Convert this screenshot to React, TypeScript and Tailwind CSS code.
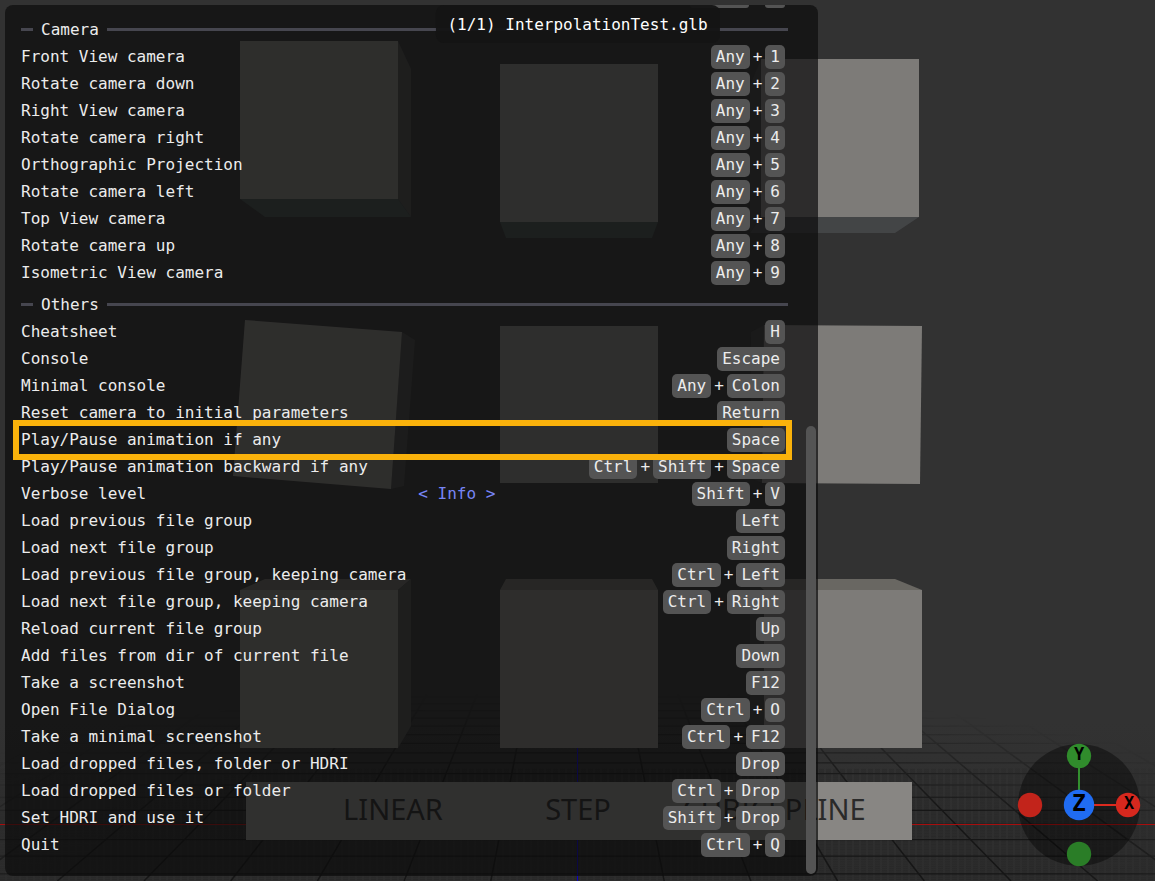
import { Fragment } from "react";
import clsx from "clsx";

type Binding = {
  label: string;
  keys: string[];
  value?: string;
  highlighted?: boolean;
};

const cameraBindings: Binding[] = [
  { label: "Front View camera", keys: ["Any", "1"] },
  { label: "Rotate camera down", keys: ["Any", "2"] },
  { label: "Right View camera", keys: ["Any", "3"] },
  { label: "Rotate camera right", keys: ["Any", "4"] },
  { label: "Orthographic Projection", keys: ["Any", "5"] },
  { label: "Rotate camera left", keys: ["Any", "6"] },
  { label: "Top View camera", keys: ["Any", "7"] },
  { label: "Rotate camera up", keys: ["Any", "8"] },
  { label: "Isometric View camera", keys: ["Any", "9"] },
];

const otherBindings: Binding[] = [
  { label: "Cheatsheet", keys: ["H"] },
  { label: "Console", keys: ["Escape"] },
  { label: "Minimal console", keys: ["Any", "Colon"] },
  { label: "Reset camera to initial parameters", keys: ["Return"] },
  { label: "Play/Pause animation if any", keys: ["Space"], highlighted: true },
  { label: "Play/Pause animation backward if any", keys: ["Ctrl", "Shift", "Space"] },
  { label: "Verbose level", keys: ["Shift", "V"], value: "Info" },
  { label: "Load previous file group", keys: ["Left"] },
  { label: "Load next file group", keys: ["Right"] },
  { label: "Load previous file group, keeping camera", keys: ["Ctrl", "Left"] },
  { label: "Load next file group, keeping camera", keys: ["Ctrl", "Right"] },
  { label: "Reload current file group", keys: ["Up"] },
  { label: "Add files from dir of current file", keys: ["Down"] },
  { label: "Take a screenshot", keys: ["F12"] },
  { label: "Open File Dialog", keys: ["Ctrl", "O"] },
  { label: "Take a minimal screenshot", keys: ["Ctrl", "F12"] },
  { label: "Load dropped files, folder or HDRI", keys: ["Drop"] },
  { label: "Load dropped files or folder", keys: ["Ctrl", "Drop"] },
  { label: "Set HDRI and use it", keys: ["Shift", "Drop"] },
  { label: "Quit", keys: ["Ctrl", "Q"] },
];

// --- FLOOR GRID ---
// One-point perspective: every depth line runs to (CX, HORIZON)
const CX = 577.5;
const HORIZON = 437;
const rowY = (k: number) => HORIZON + 1 / (0.002581 + 0.0000975 * k);

const majorRows = Array.from({ length: 17 }, (_, i) => i - 3);
const minorRows = Array.from({ length: 80 }, (_, i) => (i - 35) / 10);
const depthLines = Array.from({ length: 51 }, (_, i) => i - 25).filter((n) => n !== 0);

function Scene() {
  return (
    <svg
      className="absolute inset-0 size-full"
      viewBox="0 0 1155 881"
      preserveAspectRatio="xMidYMid slice"
      aria-hidden="true"
    >
      <defs>
        <linearGradient id="floor" x1="0" y1="0" x2="0" y2="1">
          <stop offset="0" stopColor="#323232" />
          <stop offset="0.82" stopColor="#323232" />
          <stop offset="1" stopColor="#2d2d2d" />
        </linearGradient>
        <radialGradient
          id="fade"
          gradientUnits="userSpaceOnUse"
          cx="577"
          cy="900"
          r="900"
          gradientTransform="translate(0 666) scale(1 0.26)"
        >
          <stop offset="0" stopColor="#fff" />
          <stop offset="0.55" stopColor="#fff" />
          <stop offset="0.9" stopColor="#fff" stopOpacity="0" />
        </radialGradient>
        <mask id="fadeMask" maskUnits="userSpaceOnUse" x="0" y="0" width="1155" height="881">
          <rect width="1155" height="881" fill="url(#fade)" />
        </mask>
      </defs>

      <rect width="1155" height="881" fill="url(#floor)" />

      <g mask="url(#fadeMask)" stroke="#161616">
        {minorRows.map((k) => (
          <line key={k} x1="0" x2="1155" y1={rowY(k)} y2={rowY(k)} strokeWidth="1" strokeDasharray="5 2" opacity="0.18" />
        ))}
        {majorRows.map((k) => (
          <line key={k} x1="0" x2="1155" y1={rowY(k)} y2={rowY(k)} strokeWidth="1.2" />
        ))}
        {depthLines.map((n) => (
          <line
            key={n}
            x1={CX + n * 86.7 * 0.58}
            y1={HORIZON + 444 * 0.58}
            x2={CX + n * 86.7}
            y2={HORIZON + 444}
            strokeWidth="1.5"
          />
        ))}
      </g>
      <line x1="0" x2="1155" y1="824.5" y2="824.5" stroke="#a80e0e" strokeWidth="1.2" />
      <line x1={CX} x2={CX} y1="700" y2="881" stroke="#0a00c8" strokeWidth="1" />

      {/* top row */}
      <path fill="#4a4a49" d="M398 41 411 69V217L398 199Z" />
      <path fill="#434d4a" d="M240 199H398L411 217H265Z" />
      <path fill="#817f7b" d="M240 41H398V199H240Z" />
      <path fill="#434d4a" d="M500 222H658L652 238H506Z" />
      <path fill="#807f7e" d="M500 64H658V222H500Z" />
      <path fill="#3c3c3c" d="M761 59 750 85V233L761 217Z" />
      <path fill="#434546" d="M761 217H919L895 233H750Z" />
      <path fill="#7d7b78" d="M761 59H919V217H761Z" />

      {/* middle row */}
      <path fill="#444443" d="M402 332 415 340 404 486 391 489Z" />
      <path fill="#817f7b" d="M245 320 402 332 391 489 233 476Z" />
      <path fill="#807f7e" d="M500 326H658V483H500Z" />
      <path fill="#3c3c3c" d="M764 325 751 332 750 478 762 483Z" />
      <path fill="#7d7b78" d="M764 325 922 326 920 484 762 483Z" />

      {/* bottom row */}
      <path fill="#696762" d="M240 590 265 579H411L398 590Z" />
      <path fill="#4a4a49" d="M398 590 411 579V726L398 748Z" />
      <path fill="#817f7b" d="M240 590H398V748H240Z" />
      <path fill="#696762" d="M500 590 506 579H652L658 590Z" />
      <path fill="#807e7a" d="M500 590H658V748H500Z" />
      <path fill="#3c3c3c" d="M764 590 750 579V726L764 748Z" />
      <path fill="#696762" d="M764 590 750 579H895L922 590Z" />
      <path fill="#7d7b78" d="M764 590H922V748H764Z" />

      <rect x="246" y="782" width="666" height="58" fill="#888683" />
      <g fill="#2a2a2a" fontSize="29" textAnchor="middle" className="font-['Noto_Sans',sans-serif]">
        <text x="393" y="820">LINEAR</text>
        <text x="578" y="820">STEP</text>
        <text x="774" y="820">CUBICSPLINE</text>
      </g>
    </svg>
  );
}

function AxisGizmo() {
  return (
    <svg
      className="absolute right-3.5 bottom-3.5 font-['DejaVu_Sans_Mono',monospace]"
      width="124"
      height="124"
      viewBox="0 0 124 124"
      role="img"
      aria-label="Camera orientation"
    >
      <circle cx="62" cy="62" r="61" fill="#000" fillOpacity="0.4" />
      <path d="M62 62V13" stroke="#33902f" strokeWidth="2" />
      <path d="M62 62H111" stroke="#dc2a1f" strokeWidth="2" />
      <circle cx="62" cy="13" r="12.2" fill="#308c2c" />
      <circle cx="62" cy="111" r="12.2" fill="#2a7d27" />
      <circle cx="13" cy="62" r="12.2" fill="#c2241b" />
      <circle cx="111" cy="62" r="12.2" fill="#d6281e" />
      <circle cx="62" cy="62" r="15.2" fill="#206cf2" />
      <g fill="#000" textAnchor="middle" fontWeight="700">
        <text x="62" y="17" fontSize="17">Y</text>
        <text x="112" y="66" fontSize="17">X</text>
        <text x="62" y="68" fontSize="23">Z</text>
      </g>
    </svg>
  );
}

function SectionTitle({ children }: { children: string }) {
  return (
    <h2 className="flex h-[27px] items-center gap-2">
      <span className="h-[3px] w-3 bg-[#46464f]" />
      {children}
      <span className="h-[3px] flex-1 bg-[#46464f]" />
    </h2>
  );
}

function BindingRow({ label, keys, value, highlighted }: Binding) {
  return (
    <li className={clsx("flex h-[27px] items-center pr-[3px]", highlighted && "relative z-10")}>
      <span className="w-[52%] whitespace-nowrap">{label}</span>
      {value && (
        <button type="button" className="whitespace-nowrap text-[#7785f5]">
          &lt; {value} &gt;
        </button>
      )}
      <span className="ml-auto flex items-center gap-[3px]">
        {keys.map((key, i) => (
          <Fragment key={key}>
            {i > 0 && <span>+</span>}
            <kbd className="h-6 rounded-[5px] bg-[#545454] px-[5px] font-[inherit] leading-6">{key}</kbd>
          </Fragment>
        ))}
      </span>
      {highlighted && (
        <span className="pointer-events-none absolute -top-1.5 -right-1 -bottom-[7px] -left-2 border-[6px] border-[#fab20b]" />
      )}
    </li>
  );
}

export default function App() {
  return (
    <main className="relative min-h-screen overflow-hidden bg-[#323232] p-[5px] font-['DejaVu_Sans_Mono',monospace] text-base text-[#ececec]">
      <Scene />
      <AxisGizmo />

      {/* --- CHEATSHEET --- */}
      <section className="relative flex w-full max-w-[813px] overflow-hidden rounded-lg bg-[#0b0b0b]/70 pr-0.5 pl-4">
        <div className="flex-1 pr-[18px] pb-[18px]">
          {/* tail of the row scrolled out above */}
          <div className="mb-2 flex h-[3px] justify-end gap-4 pr-[3px]" aria-hidden="true">
            <span className="w-[59px] rounded-b-[5px] bg-[#545454]" />
            <span className="w-5 rounded-b-[5px] bg-[#545454]" />
          </div>

          <SectionTitle>Camera</SectionTitle>
          <ul className="mb-[5px]">
            {cameraBindings.map((b) => (
              <BindingRow key={b.label} {...b} />
            ))}
          </ul>

          <SectionTitle>Others</SectionTitle>
          <ul>
            {otherBindings.map((b) => (
              <BindingRow key={b.label} {...b} />
            ))}
          </ul>
        </div>

        {/* Scrollbar */}
        <div className="flex w-2.5 flex-col justify-end pb-0.5">
          <div className="h-[51.5%] rounded-full bg-[#545454]" />
        </div>
      </section>

      {/* --- FILE NAME --- */}
      <h1 className="absolute top-[5px] left-1/2 -translate-x-1/2 rounded-lg bg-[#141414]/95 px-3 pt-2 pb-1.5 leading-6 whitespace-nowrap text-white">
        (1/1) InterpolationTest.glb
      </h1>
    </main>
  );
}
